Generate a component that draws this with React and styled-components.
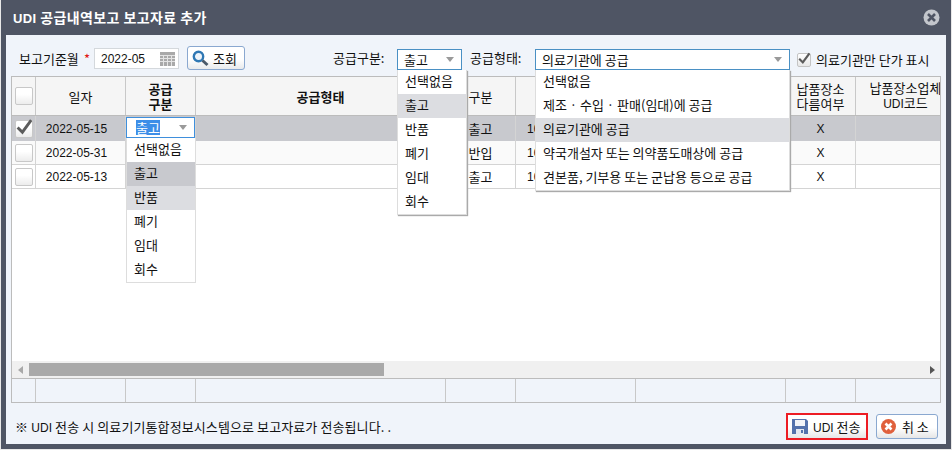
import React from 'react'
import styled, { createGlobalStyle } from 'styled-components'

const COLS = '24px 90px 70px 250px 70px 120px 150px 70px 100px'
const SEL = '#c8c9ce'
const HOVER = '#dcdde1'

const GUBUN = ['선택없음', '출고', '반품', '폐기', '임대', '회수']
const TYPES = [
  '선택없음',
  '제조 · 수입 · 판매(임대)에 공급',
  '의료기관에 공급',
  '약국개설자 또는 의약품도매상에 공급',
  '견본품, 기부용 또는 군납용 등으로 공급',
]
const ROWS = [
  { date: '2022-05-15', kind: '출고', picked: true },
  { date: '2022-05-31', kind: '반입' },
  { date: '2022-05-13', kind: '출고' },
]

const CheckMark = () => (
  <CheckSvg viewBox="0 0 20 20">
    <path d="M2 11 L8 17 L19 2" fill="none" stroke="#5c5c5c" strokeWidth="3.6" />
  </CheckSvg>
)

const Arrow = () => (
  <svg width="8" height="5" viewBox="0 0 8 5">
    <path d="M0 0 H8 L4 5 Z" fill="#9a9a9a" />
  </svg>
)

const CloseIcon = () => (
  <svg width="17" height="17" viewBox="0 0 17 17">
    <circle cx="8.5" cy="8.5" r="8" fill="#c3c6cc" />
    <path d="M5 5 L12 12 M12 5 L5 12" stroke="#4f5564" strokeWidth="2.6" />
  </svg>
)

const CalendarIcon = () => (
  <svg width="15" height="14" viewBox="0 0 15 14">
    <rect width="15" height="14" fill="#a9a9a9" />
    <path d="M0 3.5 H15 M0 6.5 H15 M0 9.5 H15 M3.5 3 V14 M7.5 3 V14 M11.5 3 V14" stroke="#e4e4e4" />
  </svg>
)

const SearchIcon = () => (
  <svg width="17" height="17" viewBox="0 0 17 17">
    <circle cx="6.5" cy="6.5" r="4.7" fill="#eef4fa" stroke="#2f78b4" strokeWidth="2.4" />
    <path d="M10.5 10.5 L15.5 15" stroke="#4a5a6a" strokeWidth="3" />
  </svg>
)

const SaveIcon = () => (
  <svg width="16" height="15" viewBox="0 0 16 15">
    <path d="M0 0 H14 L16 2 V15 H0 Z" fill="#5472ac" />
    <rect x="3" y="1" width="10" height="6" fill="#f2f4f8" />
    <rect x="4" y="10" width="8" height="5" fill="#e4e8f0" />
    <rect x="9" y="11" width="2" height="3" fill="#5472ac" />
  </svg>
)

const CancelIcon = () => (
  <svg width="15" height="15" viewBox="0 0 15 15">
    <circle cx="7.5" cy="7.5" r="7.5" fill="#e0603c" />
    <path d="M4.5 4.5 L10.5 10.5 M10.5 4.5 L4.5 10.5" stroke="#fff" strokeWidth="2.6" />
  </svg>
)

const App = () => {
  return (
    <Page>
      <GlobalStyle />
      <Window>
        <TitleBar>
          <Title>
            <Latin $bold>UDI</Latin> 공급내역보고 보고자료 추가
          </Title>
          <CloseIcon />
        </TitleBar>
        <Panel>
          <Toolbar>
            <DateLabel>보고기준월</DateLabel>
            <Star>*</Star>
            <DateInput>
              <Latin>2022-05</Latin>
              <CalendarIcon />
            </DateInput>
            <SearchButton>
              <SearchIcon />
              조회
            </SearchButton>
            <GubunLabel>공급구분:</GubunLabel>
            <Field $width={65}>
              출고
              <Arrow />
              <Menu $width={70}>
                {GUBUN.map((item) => (
                  <MenuItem key={item} $bg={item === '출고' ? HOVER : undefined}>
                    {item}
                  </MenuItem>
                ))}
              </Menu>
            </Field>
            <TypeLabel>공급형태:</TypeLabel>
            <Field $width={255}>
              의료기관에 공급
              <Arrow />
              <Menu $width={255}>
                {TYPES.map((item) => (
                  <MenuItem key={item} $bg={item === '의료기관에 공급' ? HOVER : undefined}>
                    {item}
                  </MenuItem>
                ))}
              </Menu>
            </Field>
            <SmallCheck>
              <CheckMark />
            </SmallCheck>
            <CheckLabel>의료기관만 단가 표시</CheckLabel>
          </Toolbar>

          <Grid>
            <HeadRow>
              <HeadCell>
                <Check />
              </HeadCell>
              <HeadCell>일자</HeadCell>
              <HeadCell $bold>
                <HeadText>
                  공급
                  <br />
                  구분
                </HeadText>
              </HeadCell>
              <HeadCell $bold>공급형태</HeadCell>
              <HeadCell>구분</HeadCell>
              <HeadCell />
              <HeadCell />
              <HeadCell>
                <HeadText>
                  납품장소
                  <br />
                  다름여부
                </HeadText>
              </HeadCell>
              <HeadCell>
                <HeadText>
                  납품장소업체
                  <br />
                  <Latin>UDI</Latin>코드
                </HeadText>
              </HeadCell>
            </HeadRow>

            <Body>
              {ROWS.map((row, i) => (
                <Row key={row.date} $picked={row.picked} $odd={i === 1}>
                  <Cell>
                    <Check>{row.picked && <CheckMark />}</Check>
                  </Cell>
                  <DateCell>
                    <Latin>{row.date}</Latin>
                  </DateCell>
                  <Cell>
                    {row.picked && (
                      <CellEditor>
                        <Picked>출고</Picked>
                        <Arrow />
                        <Menu $width={70} $plain>
                          {GUBUN.map((item) => (
                            <MenuItem
                              key={item}
                              $bg={item === '출고' ? SEL : item === '반품' ? HOVER : undefined}
                            >
                              {item}
                            </MenuItem>
                          ))}
                        </Menu>
                      </CellEditor>
                    )}
                  </Cell>
                  <Cell />
                  <Cell>{row.kind}</Cell>
                  <CodeCell>
                    <Latin>10</Latin>
                  </CodeCell>
                  <Cell />
                  <Cell>
                    <Latin>X</Latin>
                  </Cell>
                  <Cell />
                </Row>
              ))}
            </Body>

            <ScrollBar>
              <ScrollArrow $left />
              <ScrollThumb />
              <ScrollArrow />
            </ScrollBar>

            <FootRow>
              {Array.from({ length: 9 }).map((_, i) => (
                <FootCell key={i} />
              ))}
            </FootRow>
          </Grid>

          <Footer>
            <Note>
              ※ <Latin>UDI</Latin> 전송 시 의료기기통합정보시스템으로 보고자료가 전송됩니다. .
            </Note>
            <RedBox>
              <SaveButton>
                <SaveIcon />
                <span>
                  <Latin>UDI</Latin> 전송
                </span>
              </SaveButton>
            </RedBox>
            <CancelButton>
              <CancelIcon />
              취 소
            </CancelButton>
          </Footer>
        </Panel>
      </Window>
    </Page>
  )
}

export default App

const GlobalStyle = createGlobalStyle`
  html, body {
    margin: 0;
    padding: 0;
    background: #e8e8e8;
  }
  * {
    box-sizing: border-box;
  }
`

const Page = styled.div`
  width: 952px;
  height: 450px;
  padding: 0 1px 1px 1px;
  overflow: hidden;
  font-family: "Noto Sans CJK KR", "Liberation Sans", sans-serif;
  font-size: 13px;
  color: #111;
`

const Window = styled.div`
  height: 449px;
  display: flex;
  flex-direction: column;
  background: #4f5564;
  padding: 0 5px 5px 5px;
`

const TitleBar = styled.div`
  height: 35px;
  flex: none;
  display: flex;
  align-items: center;
  justify-content: space-between;
  padding: 0 6px 0 7px;
`

const Title = styled.div`
  color: #fff;
  font-size: 14px;
  font-weight: 700;
  line-height: 16px;
  letter-spacing: 0.4px;
`

const Latin = styled.span`
  font-family: "Liberation Sans", sans-serif;
  font-size: ${(p) => (p.$bold ? '13px' : '12px')};
`

const Panel = styled.div`
  flex: 1;
  min-height: 0;
  display: flex;
  flex-direction: column;
  background: #f0f4fa;
`

const Toolbar = styled.div`
  height: 41px;
  flex: none;
  display: flex;
  align-items: center;
  padding: 6px 0 0 13px;
  position: relative;
  z-index: 2;
`

const DateLabel = styled.div`
  width: 65px;
  white-space: nowrap;
`

const Star = styled.span`
  width: 10px;
  color: #e01010;
`

const DateInput = styled.div`
  width: 85px;
  height: 21px;
  background: #fff;
  border: 1px solid #d4d8dc;
  display: flex;
  align-items: center;
  justify-content: space-between;
  padding: 0 3px 0 6px;
`

const SearchButton = styled.div`
  width: 58px;
  height: 24px;
  margin-left: 8px;
  margin-top: -1px;
  display: flex;
  align-items: center;
  gap: 4px;
  padding-left: 4px;
  border: 1px solid #8aa8d0;
  border-radius: 3px;
  background: linear-gradient(#fff 55%, #e8eaec);
`

const GubunLabel = styled.div`
  width: 64px;
  margin-left: 88px;
  white-space: nowrap;
  margin-top: -2px;
`

const TypeLabel = styled.div`
  width: 65px;
  margin-left: 8px;
  white-space: nowrap;
  margin-top: -2px;
`

const Field = styled.div`
  position: relative;
  width: ${(p) => p.$width}px;
  height: 21px;
  margin-top: 2px;
  background: #fff;
  border: 1px solid #4a90c4;
  display: flex;
  align-items: center;
  justify-content: space-between;
  padding: 0 7px 0 6px;
`

const Menu = styled.div`
  position: absolute;
  top: calc(100% + 1px);
  left: -1px;
  width: ${(p) => p.$width}px;
  background: #fff;
  border: 1px solid #ddd;
  border-top: none;
  box-shadow: ${(p) => (p.$plain ? 'none' : '1px 1px 1px #aaa')};
  z-index: 5;
  color: #111;
  font-size: 13px;
`

const MenuItem = styled.div`
  height: 24px;
  line-height: 22px;
  padding-left: 7px;
  white-space: nowrap;
  background: ${(p) => p.$bg || 'transparent'};
`

const SmallCheck = styled.div`
  width: 14px;
  height: 14px;
  margin-left: 7px;
  margin-top: 2px;
  position: relative;
  border: 1px solid #c4c4c4;
  border-radius: 2px;
  background: linear-gradient(#fff, #e8e8e8);
`

const CheckSvg = styled.svg`
  position: absolute;
  left: 0;
  bottom: 0;
  width: 100%;
  height: 120%;
`

const CheckLabel = styled.div`
  margin-left: 5px;
  margin-top: 1px;
  white-space: nowrap;
`

const Grid = styled.div`
  height: 327px;
  flex: none;
  margin: 0 0 0 5px;
  width: 930px;
  display: flex;
  flex-direction: column;
  border: 1px solid #bcbcbc;
  overflow: hidden;
  position: relative;
  z-index: 1;
`

const HeadRow = styled.div`
  height: 39px;
  flex: none;
  display: grid;
  grid-template-columns: ${COLS};
  background: #f5f5f5;
  border-bottom: 1px solid #bcbcbc;
`

const HeadCell = styled.div`
  display: flex;
  align-items: center;
  justify-content: center;
  text-align: center;
  white-space: nowrap;
  font-weight: ${(p) => (p.$bold ? 700 : 400)};
  border-right: 1px solid #c8c8c8;
`

const HeadText = styled.div`
  line-height: 15px;
  text-align: center;
`

const Body = styled.div`
  flex: 1;
  min-height: 0;
  background: #fff;
`

const Row = styled.div`
  display: grid;
  grid-template-columns: ${COLS};
  height: ${(p) => (p.$picked ? '25px' : '24px')};
  background: ${(p) => (p.$picked ? SEL : p.$odd ? '#fafafa' : '#fff')};
  border-bottom: ${(p) => (p.$picked ? 'none' : '1px solid #d4d4d4')};
`

const Cell = styled.div`
  position: relative;
  display: flex;
  align-items: center;
  justify-content: center;
  white-space: nowrap;
  border-right: 1px solid #d4d4d4;
`

const DateCell = styled(Cell)`
  padding-right: 8px;
`

const CodeCell = styled(Cell)`
  justify-content: flex-start;
  padding-left: 11px;
`

const Check = styled.div`
  width: 18px;
  height: 18px;
  position: relative;
  border: 1px solid #c8c8c8;
  border-radius: 2px;
  background: linear-gradient(#fff 40%, #ececec);
`

const CellEditor = styled.div`
  position: absolute;
  left: 0;
  top: 1px;
  width: 69px;
  height: 21px;
  background: #fff;
  border: 1px solid #3f8fdc;
  display: flex;
  align-items: center;
  justify-content: space-between;
  padding: 0 7px 0 9px;
  z-index: 4;
`

const Picked = styled.span`
  background: #3d8ee8;
  color: #fff;
  line-height: 15px;
`

const ScrollBar = styled.div`
  height: 17px;
  flex: none;
  display: flex;
  align-items: center;
  background: #f0f0f0;
  padding: 0 0 0 6px;
`

const ScrollArrow = styled.div`
  width: 0;
  height: 0;
  border-top: 4px solid transparent;
  border-bottom: 4px solid transparent;
  border-right: ${(p) => (p.$left ? '5px solid #a8a8a8' : 'none')};
  border-left: ${(p) => (p.$left ? 'none' : '5px solid #555')};
`

const ScrollThumb = styled.div`
  width: 355px;
  height: 13px;
  margin: 0 546px 0 6px;
  flex: none;
  background: #a9a9a9;
`

const FootRow = styled.div`
  height: 24px;
  flex: none;
  display: grid;
  grid-template-columns: ${COLS};
  border-top: 1px solid #bcbcbc;
`

const FootCell = styled.div`
  border-right: 1px solid #c8c8c8;
`

const Footer = styled.div`
  flex: 1;
  display: flex;
  align-items: center;
  padding: 5px 8px 0 9px;
`

const Note = styled.div`
  flex: 1;
  white-space: nowrap;
  letter-spacing: 0.1px;
`

const RedBox = styled.div`
  width: 82px;
  height: 27px;
  border: 2px solid #ed1c24;
  display: flex;
`

const SaveButton = styled.div`
  flex: 1;
  display: flex;
  align-items: center;
  gap: 5px;
  padding-left: 4px;
  background: linear-gradient(#fff 55%, #e6e6e6);
`

const CancelButton = styled.div`
  width: 62px;
  height: 25px;
  margin-left: 8px;
  display: flex;
  align-items: center;
  gap: 6px;
  padding-left: 4px;
  border: 1px solid #8aa8d0;
  border-radius: 3px;
  background: linear-gradient(#fff 55%, #e6e6e6);
`
